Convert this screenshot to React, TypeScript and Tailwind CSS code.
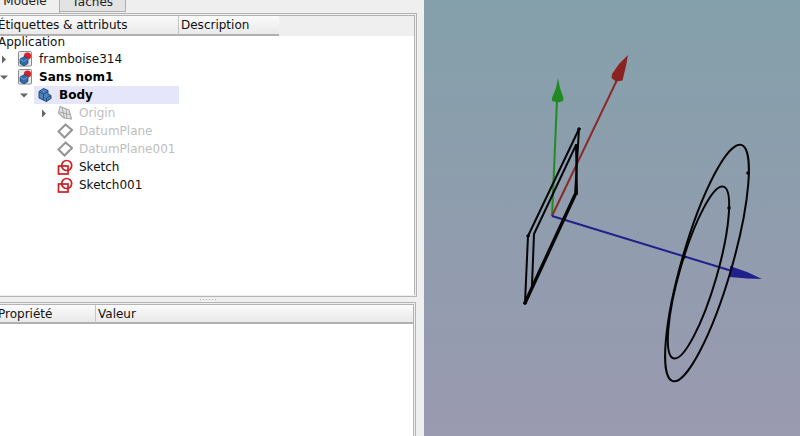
import React from "react";

const font = { fontFamily: '"DejaVu Sans", sans-serif' };

function Arrow({ open }: { open?: boolean }) {
  return (
    <svg width="9" height="9" viewBox="0 0 9 9" className="shrink-0">
      {open ? <path d="M0 2.5H8L4 6.5Z" fill="#666" /> : <path d="M2 0.5V8.5L6 4.5Z" fill="#666" />}
    </svg>
  );
}

function DocIcon() {
  return (
    <svg width="16" height="16" viewBox="0 0 16 16" className="shrink-0">
      <rect x="1.5" y="0.5" width="13" height="14.5" rx="1" fill="#e8e8e8" stroke="#8a8a8a" />
      <circle cx="10.5" cy="5" r="3.6" fill="#d4202a" />
      <path d="M3 8L7.5 5.5L11 7.5V12.5L7 15L3 12.5Z" fill="#2f69a8" stroke="#173f6e" strokeWidth="0.7" />
      <path d="M3.5 8.5L7 10.5L10.5 8" fill="none" stroke="#7fb0e0" strokeWidth="0.8" />
    </svg>
  );
}

function BodyIcon() {
  return (
    <svg width="16" height="16" viewBox="0 0 16 16" className="shrink-0">
      <path d="M2 4.5L6.5 1.5L11 3.5V7L14 8.5V11.5L9.5 14.5L2 11Z" fill="#4d82bd" stroke="#1f4873" strokeWidth="1" strokeLinejoin="round" />
      <path d="M2 4.5L6.5 7V13M6.5 7L11 4.5M9.5 11V14.5M9.5 11L14 8.5" fill="none" stroke="#1f4873" strokeWidth="0.9" />
    </svg>
  );
}

function OriginIcon() {
  return (
    <svg width="16" height="16" viewBox="0 0 16 16" className="shrink-0">
      <path d="M3 1.5L12 5L14.5 14L7 13L1.5 8Z" fill="#e4e4e4" stroke="#a5a5a5" strokeWidth="1.1" strokeLinejoin="round" />
      <path d="M2.5 7L13 9.5M5 2.5L7.5 13M9 4L10 13.5" fill="none" stroke="#a5a5a5" strokeWidth="1" />
    </svg>
  );
}

function DatumIcon() {
  return (
    <svg width="16" height="16" viewBox="0 0 16 16" className="shrink-0">
      <path d="M8.5 1.5L15 7L7.5 14.5L1.5 8.5Z" fill="none" stroke="#949494" strokeWidth="2" />
    </svg>
  );
}

function SketchIcon() {
  return (
    <svg width="16" height="16" viewBox="0 0 16 16" className="shrink-0">
      <rect x="1.5" y="7" width="9.5" height="8" fill="none" stroke="#cc1f24" strokeWidth="1.7" />
      <circle cx="9.7" cy="6.5" r="5" fill="none" stroke="#cc1f24" strokeWidth="1.7" />
    </svg>
  );
}

function Row({ level, arrow, icon, label, bold, muted, selected }: {
  level: number; arrow?: "open" | "closed"; icon: React.ReactNode; label: string;
  bold?: boolean; muted?: boolean; selected?: boolean;
}) {
  return (
    <div className="flex h-[18px] items-center" style={{ paddingLeft: level * 20 }}>
      <div className="flex w-[17px] shrink-0 justify-start">
        {arrow && <Arrow open={arrow === "open"} />}
      </div>
      <div className={`flex h-[18px] items-center ${selected ? "bg-[#e6e6fa]" : ""}`} style={selected ? { width: 145, marginLeft: -3, paddingLeft: 3 } : undefined}>
        {icon}
        <span className={`ml-[6px] whitespace-nowrap text-[12px] ${bold ? "font-bold text-black" : muted ? "text-[#bebebe]" : "text-[#111]"}`}>
          {label}
        </span>
      </div>
    </div>
  );
}

function HeaderCell({ w, children, border }: { w: string; children: React.ReactNode; border?: boolean }) {
  return (
    <div className={`${w} flex h-full shrink-0 items-center overflow-hidden whitespace-nowrap border-b-2 border-b-[#b0b0b0] bg-gradient-to-b from-[#fbfbfb] to-[#e9e9e9] text-[12px] text-[#111] ${border ? "border-r border-r-[#c4c4c4]" : ""}`}>
      {children}
    </div>
  );
}

export default function App() {
  return (
    <div className="flex h-[436px] w-[800px] overflow-hidden bg-[#efefef]" style={font}>
      <div className="flex h-full w-[424px] shrink-0 flex-col">
        {/* tabs */}
        <div className="flex h-[13px] shrink-0 overflow-hidden text-[12px] text-[#222]">
          <div className="-ml-[9px] flex h-[13px] w-[69px] shrink-0 items-start justify-center border-r border-r-[#b0b0b0] bg-[#efefef] leading-[14px]"><span className="-mt-[6px]">Modèle</span></div>
          <div className="flex h-[12px] w-[66px] shrink-0 items-start justify-center border-r border-b border-[#b0b0b0] bg-[#e3e3e3] leading-[14px]"><span className="-mt-[5px]">Tâches</span></div>
        </div>
        {/* tree panel */}
        <div className="mr-[7px] flex h-[284px] shrink-0 flex-col border border-l-0 border-[#b4b4b4] p-[1px] pl-0">
          <div className="flex flex-1 flex-col overflow-hidden border-r border-t border-[#b4b4b4] bg-white">
            <div className="flex h-[20px] shrink-0 bg-[#efefef]">
              <HeaderCell w="w-[179px]" border><span className="-ml-[2px]">Étiquettes &amp; attributs</span></HeaderCell>
              <HeaderCell w="w-[100px]"><span className="ml-[2px]">Description</span></HeaderCell>
            </div>
            <div>
              <div className="-ml-[2px] flex h-[14px] items-start text-[12px] leading-[13px] text-[#111]">Application</div>
              <div>
                <Row level={0} arrow="closed" icon={<DocIcon />} label="framboise314" />
                <Row level={0} arrow="open" icon={<DocIcon />} label="Sans nom1" bold />
                <Row level={1} arrow="open" icon={<BodyIcon />} label="Body" bold selected />
                <Row level={2} arrow="closed" icon={<OriginIcon />} label="Origin" muted />
                <Row level={2} icon={<DatumIcon />} label="DatumPlane" muted />
                <Row level={2} icon={<DatumIcon />} label="DatumPlane001" muted />
                <Row level={2} icon={<SketchIcon />} label="Sketch" />
                <Row level={2} icon={<SketchIcon />} label="Sketch001" />
              </div>
            </div>
          </div>
        </div>
        {/* splitter */}
        <div className="flex h-[5px] shrink-0 items-center justify-center pr-[8px]">
          <div className="flex gap-[2px]">
            {[0, 1, 2, 3, 4, 5].map((i) => (
              <div key={i} className="h-[1px] w-[1px] bg-[#b0b0b0]" />
            ))}
          </div>
        </div>
        {/* property panel */}
        <div className="mr-[8px] flex min-h-0 flex-1 flex-col border border-b-0 border-l-0 border-[#b4b4b4] pr-[1px] pt-[1px]">
          <div className="flex flex-1 flex-col border-r border-t border-[#b4b4b4] bg-white">
            <div className="flex h-[19px] shrink-0">
              <HeaderCell w="w-[96px]" border><span className="-ml-[2px]">Propriété</span></HeaderCell>
              <div className="flex h-full flex-1 items-center border-b-2 border-b-[#b0b0b0] bg-gradient-to-b from-[#fbfbfb] to-[#e9e9e9] text-[12px] text-[#111]">
                <span className="ml-[2px]">Valeur</span>
              </div>
            </div>
          </div>
        </div>
      </div>

      {/* 3D view */}
      <div className="relative h-full flex-1 bg-gradient-to-b from-[#84a0ab] to-[#9a9ab0]">
        <svg width="376" height="436" viewBox="424 0 376 436" className="block">
          {/* axes */}
          <path d="M552 216L557 100" stroke="#228b22" strokeWidth="2" fill="none" />
          <path d="M558 78L560 88L563.5 98L563 101L558 102.5L552 101L552 98L556 88Z" fill="#1f8a22" />
          <path d="M552 216L617 80" stroke="#8b2a2a" strokeWidth="2" fill="none" />
          <path d="M628 55L626 66L622.5 80.5L616 81.5L611.5 78L612 74L619 64Z" fill="#8b2222" />
          <path d="M552 216L732 271" stroke="#20208c" strokeWidth="2" fill="none" />
          <path d="M730 266L747 272L762 279L747 278.5L730 277Z" fill="#20208c" />
          {/* datum plane sketch */}
          <g fill="none" stroke="#050505" strokeLinecap="round" strokeLinejoin="round">
            <path d="M579 129L528 236L525 303L575 195Z" strokeWidth="2" />
            <path d="M576 145L534 234L532 285" strokeWidth="2" />
            <path d="M576 145L577 194" strokeWidth="2" />
            <path d="M525 303L575 195" strokeWidth="3.4" />
            <circle cx="579" cy="129" r="1.3" strokeWidth="1" />
            <circle cx="528" cy="236" r="1.3" strokeWidth="1" />
            <circle cx="525" cy="303" r="1.3" strokeWidth="1" />
          </g>
          {/* rings */}
          <g fill="none" stroke="#050505" strokeWidth="2">
            <ellipse cx="707" cy="263" rx="25" ry="123" transform="rotate(16.2 707 263)" />
            <ellipse cx="698.5" cy="272.5" rx="18.5" ry="89.4" transform="rotate(16.2 698.5 272.5)" />
          </g>
          <g fill="#050505">
            <circle cx="748" cy="173" r="1.8" />
            <circle cx="729" cy="208" r="1.8" />
            <circle cx="684" cy="257" r="1.8" />
          </g>
        </svg>
      </div>
    </div>
  );
}
